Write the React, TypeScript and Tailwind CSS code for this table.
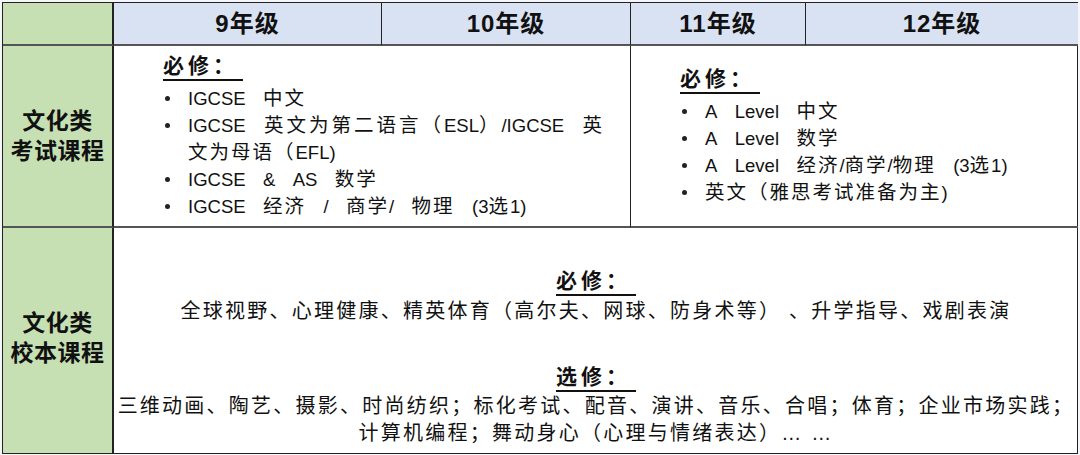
import React from "react";

const font = { fontFamily: '"Liberation Sans", "Noto Sans CJK SC", sans-serif' };

// Latin runs keep normal spacing, CJK text gets the wider tracking of the original
function T({ text }: { text: string }) {
  const parts = text.split(/([A-Za-z0-9&.()/]+)/);
  return (
    <>
      {parts.map((p, i) =>
        /^[A-Za-z0-9&.()/]+$/.test(p) ? (
          <span key={i} className="tracking-normal text-[18.5px]">
            {p}
          </span>
        ) : (
          <span key={i}>{p}</span>
        )
      )}
    </>
  );
}

function Heading({ children, h = "h-[32px]" }: { children: React.ReactNode; h?: string }) {
  return (
    <div className={h + " tracking-normal"}>
      <span className="inline-block mt-[2px] w-[80px] pb-[3px] border-b-2 border-[#111] text-[21px] font-bold leading-[20px] tracking-[4px]">
        {children}
      </span>
    </div>
  );
}

function Item({ children }: { children: React.ReactNode }) {
  return (
    <div className="flex">
      <span className="w-[25px] h-[27px] shrink-0 flex items-center">
        <span className="ml-[2px] w-[5px] h-[5px] rounded-full bg-[#222]" />
      </span>
      <div>{children}</div>
    </div>
  );
}

export default function App() {
  return (
    <div className="w-[1080px] h-[455px] bg-[#f4f6f9] p-[2px]" style={font}>
      <div className="grid grid-cols-[111px_268px_249px_175px_272px] grid-rows-[43px_182px_225px] border border-[#222] bg-white text-[#111]">
        {/* header */}
        <div className="bg-[#c6e0b4] border-r-2 border-b-2 border-r-[#222] border-b-[#555]" />
        {["9年级", "10年级", "11年级", "12年级"].map((g, i) => (
          <div
            key={g}
            className={
              "bg-[#d9e2f3] border-b-2 border-b-[#555] flex items-center justify-center text-[24px] font-bold tracking-[1px] " +
              (i < 3 ? "border-r border-r-[#222]" : "")
            }
          >
            {g}
          </div>
        ))}

        {/* exam courses */}
        <div className="bg-[#c6e0b4] border-r-2 border-b-2 border-r-[#222] border-b-[#555] flex flex-col items-center justify-center text-[23px] font-bold leading-[30px] tracking-[0.5px]">
          <div>文化类</div>
          <div>考试课程</div>
        </div>
        <div className="col-span-2 border-r border-r-[#222] border-b-2 border-b-[#555] flex items-center pl-[49px] pr-2">
          <div className="text-[19.5px] leading-[27px] tracking-[2px] [word-spacing:10px] whitespace-nowrap">
            <Heading>必修：</Heading>
            <Item><T text="IGCSE 中文" /></Item>
            <Item>
              <span className="tracking-[3px]">
                <T text="IGCSE 英文为第二语言（ESL）/IGCSE 英" />
              </span>
              <br />
              <T text="文为母语（EFL)" />
            </Item>
            <Item><T text="IGCSE & AS 数学" /></Item>
            <Item><T text="IGCSE 经济 / 商学/ 物理 (3选1)" /></Item>
          </div>
        </div>
        <div className="col-span-2 border-b-2 border-b-[#555] flex items-center pl-[49px]">
          <div className="text-[19.5px] leading-[27px] tracking-[2px] [word-spacing:10px] whitespace-nowrap">
            <Heading>必修：</Heading>
            <Item><T text="A Level 中文" /></Item>
            <Item><T text="A Level 数学" /></Item>
            <Item><T text="A Level 经济/商学/物理 (3选1)" /></Item>
            <Item><T text="英文（雅思考试准备为主)" /></Item>
          </div>
        </div>

        {/* school-based courses */}
        <div className="bg-[#c6e0b4] border-r-2 border-r-[#222] flex flex-col items-center justify-center pb-[5px] text-[23px] font-bold leading-[30px] tracking-[0.5px]">
          <div>文化类</div>
          <div>校本课程</div>
        </div>
        <div className="col-span-4 flex flex-col items-center pt-[40px] text-[20px] leading-[27px] tracking-[2.25px]">
          <Heading h="h-[30px]">必修：</Heading>
          <div>全球视野、心理健康、精英体育（高尔夫、网球、防身术等）&nbsp;、升学指导、戏剧表演</div>
          <div className="mt-[39px]">
            <Heading h="h-[29px]">选修：</Heading>
          </div>
          <div className="text-center">
            三维动画、陶艺、摄影、时尚纺织；标化考试、配音、演讲、音乐、合唱；体育；企业市场实践；
            <br />
            计算机编程；舞动身心（心理与情绪表达）… …
          </div>
        </div>
      </div>
    </div>
  );
}
